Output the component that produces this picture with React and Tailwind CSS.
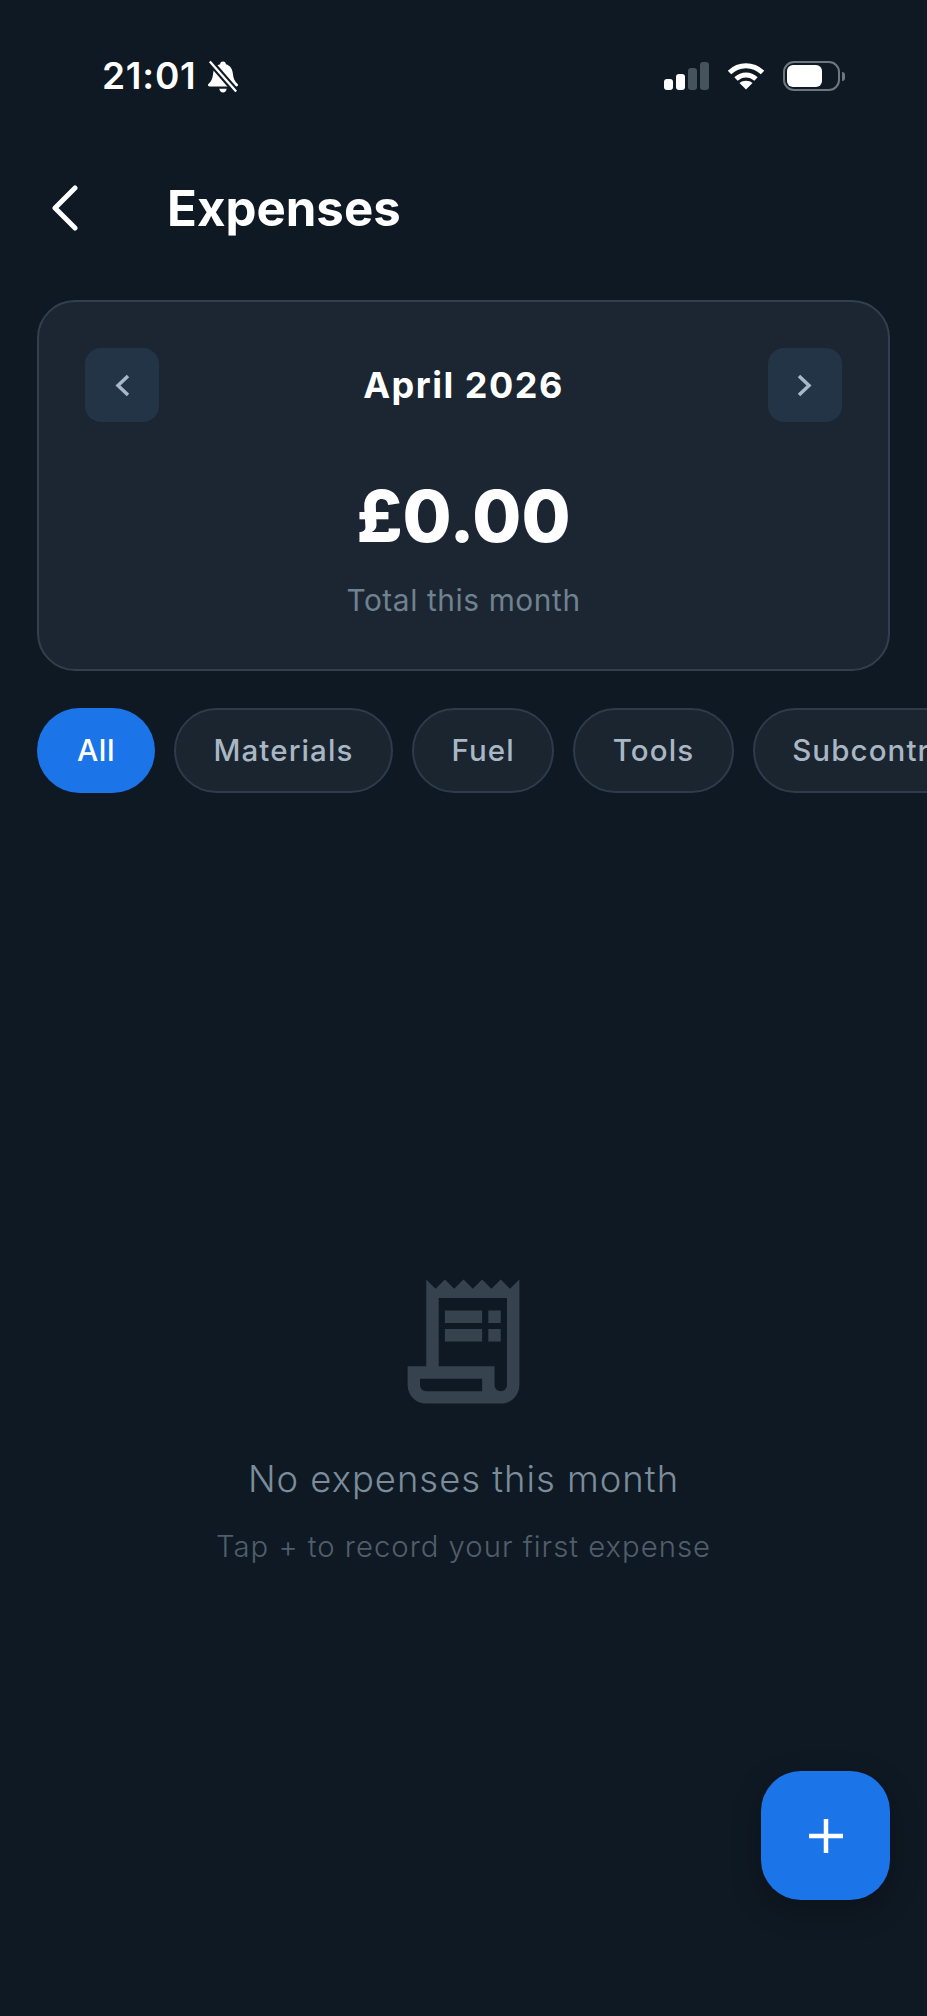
import React from 'react';
import { MdOutlineReceiptLong } from 'react-icons/md';

const categories = ['Materials', 'Fuel', 'Tools', 'Subcontractors'];

function StatusBar() {
  return (
    <div className="flex h-[98px] items-end justify-between pl-[102px] pr-[82px] text-white">
      <div className="flex items-center gap-[10px]">
        <span className="text-[37px] leading-[44px] font-semibold tracking-[0.8px]">21:01</span>
        {/* muted bell */}
        <svg width="32" height="35" viewBox="0 0 34 36" fill="none">
          <path d="M17 2c2 0 3 1 3 3 5 1.500 7 5 7.500 10 .5 5 2 8 5 11 1 1 .5 2.500-1 2.500H2.500c-1.500 0-2-1.500-1-2.500 3-3 4.500-6 5-11C7 10 9 6.500 14 5c0-2 1-3 3-3z" fill="white" />
          <path d="M13 31h8c-.5 2.500-2 4-4 4s-3.500-1.500-4-4z" fill="white" />
          <path d="M3 2l28 32" stroke="#0f1923" strokeWidth="7" />
          <path d="M3 2l28 32" stroke="white" strokeWidth="2.500" />
        </svg>
      </div>
      <div className="flex items-center gap-[18px] pb-[7px]">
        <div className="flex items-end gap-[3px]">
          <span className="h-[11px] w-[9px] rounded-[3px] bg-white" />
          <span className="h-[16px] w-[9px] rounded-[3px] bg-white" />
          <span className="h-[22px] w-[9px] rounded-[3px] bg-[#46525c]" />
          <span className="h-[28px] w-[9px] rounded-[3px] bg-[#46525c]" />
        </div>
        <svg width="38" height="29" viewBox="0 0 38 28" fill="none" stroke="white" strokeWidth="5">
          <path d="M2.500 10C12 1 26 1 35.500 10" />
          <path d="M9 16.500c6-5.500 14-5.500 20 0" />
          <path d="M19 27l-6.500-6.500c3.500-3 9.500-3 13 0z" fill="white" stroke="none" />
        </svg>
        <div className="flex items-center gap-[2px]">
          <div className="flex h-[30px] w-[57px] items-center rounded-[11px] border-[2.500px] border-[#6d7780] p-[2px]">
            <div className="h-full w-[35px] rounded-[6px] bg-white" />
          </div>
          <span className="h-[9px] w-[3px] rounded-r-full bg-[#6d7780]" />
        </div>
      </div>
    </div>
  );
}

function MonthButton({ d }) {
  return (
    <button className="flex h-[74px] w-[74px] items-center justify-center rounded-[16px] bg-[#233447]">
      <svg width="17" height="23" viewBox="0 0 17 23" fill="none" stroke="#a9b8c9" strokeWidth="3.500">
        <path d={d} />
      </svg>
    </button>
  );
}

function App() {
  return (
    <div className="relative flex h-[2016px] w-[927px] flex-col overflow-hidden bg-[#0f1923] font-['Inter',sans-serif]">
      <StatusBar />

      <div className="flex h-[202px] items-center pl-[51px] pt-[18px]">
        <svg width="27" height="46" viewBox="0 0 27 46" fill="none" stroke="white" strokeWidth="5" strokeLinecap="round" strokeLinejoin="round">
          <path d="M24 3L4 23l20 20" />
        </svg>
        <h1 className="ml-[89px] text-[49.200px] leading-[60px] font-bold text-white">Expenses</h1>
      </div>

      <section className="mx-[37px] flex h-[371px] flex-col rounded-[38px] border-2 border-[#313f4f] bg-[#1b2632] px-[46px] pt-[46px]">
        <div className="flex items-center justify-between">
          <MonthButton d="M14 2L4 11.500 14 21" />
          <h2 className="text-[36px] leading-[42px] font-bold tracking-[1.500px] text-white">April 2026</h2>
          <MonthButton d="M3 2l10 9.500L3 21" />
        </div>
        <div className="mt-[51px] text-center text-[71px] leading-[86px] font-extrabold text-white">£0.00</div>
        <div className="mt-[24px] text-center text-[29.800px] leading-[34px] tracking-[0.6px] text-[#70818f]">Total this month</div>
      </section>

      <div className="mt-[37px] flex gap-[19px] overflow-hidden pl-[37px]">
        <button className="h-[85px] w-[118px] shrink-0 rounded-full bg-[#1b74e8] text-[30px] font-medium tracking-[0.5px] text-white">All</button>
        {categories.map((label) => (
          <button key={label} className="h-[85px] shrink-0 rounded-full border-2 border-[#2d3b4a] bg-[#1a2530] px-[37.500px] text-[29.500px] font-medium tracking-[1.100px] whitespace-nowrap text-[#a9b6c4]">
            {label}
          </button>
        ))}
      </div>

      <div className="mt-[474px] flex flex-col items-center">
        <MdOutlineReceiptLong size={149} className="text-[#36434f]" />
        <p className="mt-[41px] text-[36.400px] leading-[44px] font-light tracking-[1px] text-[#7b8c9b]">No expenses this month</p>
        <p className="mt-[28px] text-[29.300px] leading-[36px] font-light tracking-[1px] text-[#505e6b]">Tap + to record your first expense</p>
      </div>

      <button className="absolute left-[761px] top-[1771px] flex h-[129px] w-[129px] items-center justify-center rounded-[40px] bg-[#1b74e8] shadow-[0_10px_30px_rgba(0,0,0,0.25)]">
        <svg width="34" height="34" viewBox="0 0 34 34" stroke="white" strokeWidth="4.500">
          <path d="M17 0v34M0 17h34" />
        </svg>
      </button>
    </div>
  );
}

export default App;
